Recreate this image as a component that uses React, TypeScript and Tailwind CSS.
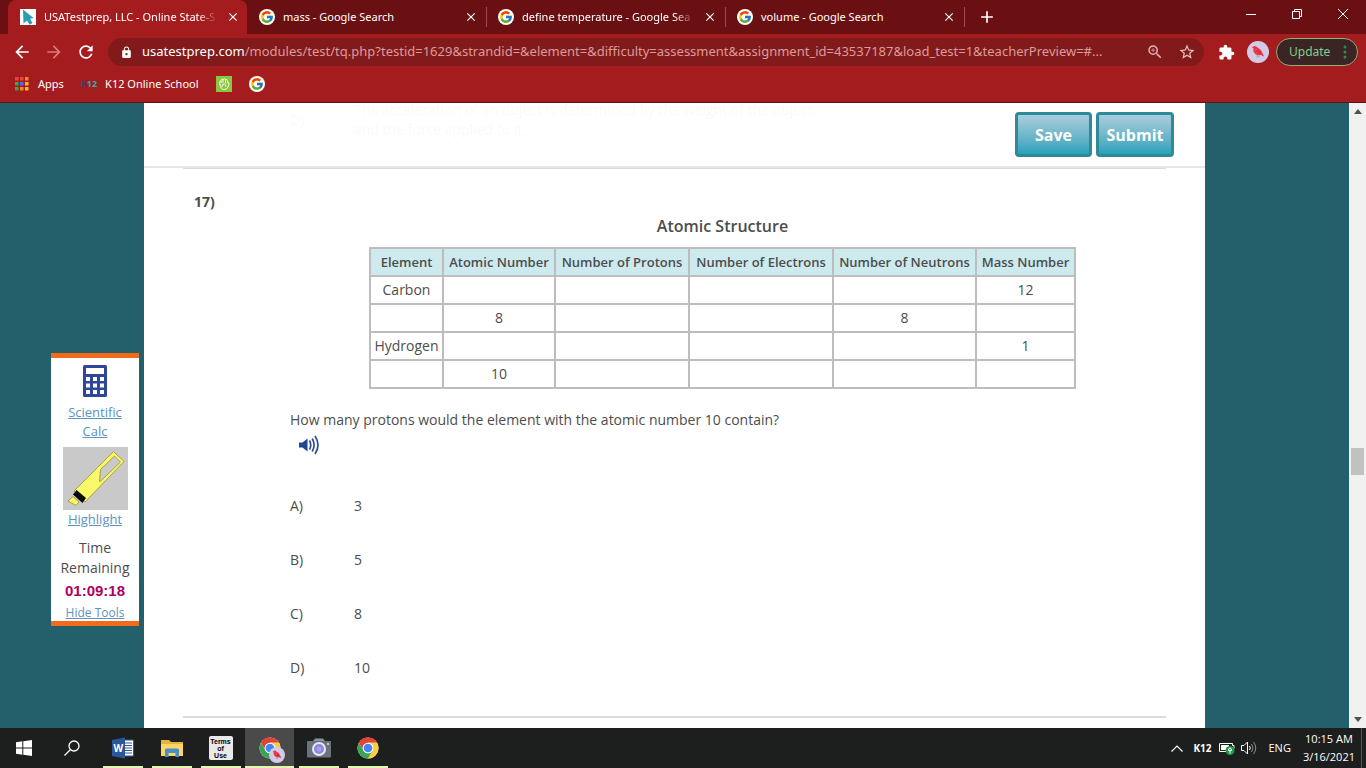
import type { ReactNode } from 'react';
import { FcGoogle } from 'react-icons/fc';
import {
  MdAdd,
  MdArrowBack,
  MdArrowForward,
  MdClose,
  MdExtension,
  MdLock,
  MdRefresh,
  MdStarBorder,
  MdZoomIn,
} from 'react-icons/md';

interface Tab {
  id: number;
  title: string;
  active?: boolean;
}

const tabs: Tab[] = [
  { id: 1, title: 'USATestprep, LLC - Online State-S', active: true },
  { id: 2, title: 'mass - Google Search' },
  { id: 3, title: 'define temperature - Google Sea' },
  { id: 4, title: 'volume - Google Search' },
];

const columns = [
  { name: 'Element', width: 'w-[73px]' },
  { name: 'Atomic Number', width: 'w-[112px]' },
  { name: 'Number of Protons', width: 'w-[134px]' },
  { name: 'Number of Electrons', width: 'w-[144px]' },
  { name: 'Number of Neutrons', width: 'w-[143px]' },
  { name: 'Mass Number', width: 'w-[99px]' },
];

const rows = [
  ['Carbon', '', '', '', '', '12'],
  ['', '8', '', '', '8', ''],
  ['Hydrogen', '', '', '', '', '1'],
  ['', '10', '', '', '', ''],
];

const answers = [
  { letter: 'A)', text: '3' },
  { letter: 'B)', text: '5' },
  { letter: 'C)', text: '8' },
  { letter: 'D)', text: '10' },
];

function GoogleIcon() {
  return (
    <span className="flex size-4 shrink-0 items-center justify-center rounded-full bg-white">
      <FcGoogle size={14} />
    </span>
  );
}

function CursorIcon() {
  return (
    <svg viewBox="0 0 16 16" className="size-4 shrink-0">
      <rect width="16" height="16" fill="#fff" />
      <path d="M3 0.500 L13.500 9 L10 9.800 L12.500 14 L9.500 15.800 L7 11.500 L3.500 14.500 Z" fill="#2a9db0" />
    </svg>
  );
}

function AppsIcon() {
  const colors = ['#e8453c', '#e8453c', '#f08a24', '#35a853', '#4a6cf0', '#f3b52a', '#35a853', '#f08a24', '#f3b52a'];
  return (
    <svg viewBox="0 0 14 14" className="size-[14px]">
      {colors.map((c, i) => (
        <rect key={i} x={(i % 3) * 5} y={Math.floor(i / 3) * 5} width="3.500" height="3.500" fill={c} />
      ))}
    </svg>
  );
}

function HandIcon() {
  return (
    <svg viewBox="0 0 16 16" className="size-4" fill="none" stroke="#fff" strokeLinecap="round" strokeLinejoin="round">
      <rect width="16" height="16" fill="#8cc63f" stroke="none" />
      <path d="M4 8.500 L3.500 6 Q4.500 5 5.200 6.500 L5 4 Q6 2.800 7 4 L7.500 3 Q8.800 2 9.500 3.500 Q11 2.800 11.300 4.500 L11.800 7 Q13.500 6 13 8 L12 11 Q10.500 13.800 8 13.500 Q4.500 13.300 4 8.500 Z" strokeWidth="0.900" />
      <path d="M6 10.500 Q6 8 8.500 8 Q10 8.500 10 10.500 M7 4 V7 M9.500 3.500 V7" strokeWidth="0.900" />
    </svg>
  );
}

function BirdAvatar({ className }: { className: string }) {
  return (
    <svg viewBox="0 0 22 22" className={className}>
      <circle cx="11" cy="11" r="11" fill="#d3cbe6" />
      <path d="M5 6.500 L7 5 Q9 4.500 10.500 6.500 Q14 8 15 11 L17 15.500 L13.500 14 Q8.500 14.500 7 11.500 Q6 9.500 6.500 7.500 Z" fill="#e63946" />
      <path d="M10 9 Q13.500 10 14 13 Q11 12.500 10 9 Z" fill="#c42b3b" />
      <path d="M10.500 14 L10 16.500 M12 14.200 L12 16.500" stroke="#777" strokeWidth="0.600" />
    </svg>
  );
}

function ChromeIcon() {
  return (
    <svg viewBox="0 0 48 48" className="size-[22px]">
      <circle cx="24" cy="24" r="23" fill="#fff" />
      <path d="M24 1 A23 23 0 0 1 43.900 12.500 L24 12.500 A11.500 11.500 0 0 0 14 18.200 L4.100 12.500 A23 23 0 0 1 24 1 Z" fill="#e24434" />
      <path d="M43.900 12.500 A23 23 0 0 1 24 47 L34 29.700 A11.500 11.500 0 0 0 34 18.200 L24 12.500 Z" fill="#fbcd3f" />
      <path d="M4.100 12.500 A23 23 0 0 0 24 47 L34 29.700 A11.500 11.500 0 0 1 14 29.700 Z" fill="#38a455" />
      <path d="M4.100 12.500 L14 29.700 A11.500 11.500 0 0 1 14 18.200 L24 12.500 L24 1 A23 23 0 0 0 4.100 12.500 Z" fill="#e24434" />
      <circle cx="24" cy="24" r="11.500" fill="#fff" />
      <circle cx="24" cy="24" r="9.500" fill="#4385f4" />
    </svg>
  );
}

function CalculatorIcon() {
  return (
    <svg viewBox="0 0 24 32" className="h-8 w-6">
      <rect width="24" height="32" rx="1.500" fill="#2f479b" />
      <rect x="3" y="3" width="18" height="6" fill="#fff" />
      {[12, 18.500, 25].map((y) =>
        [3, 10, 17].map((x) => <rect key={`${x}-${y}`} x={x} y={y} width="4" height="4" fill="#fff" />)
      )}
    </svg>
  );
}

function HighlighterIcon() {
  return (
    <svg viewBox="0 0 65 63" className="h-[63px] w-[65px]">
      <rect width="65" height="63" fill="#c9c9c9" />
      <path d="M50.500 4.500 L61 14.500 L22 55 L11 44 Z" fill="#f9f96a" stroke="#a8a040" />
      <path d="M51.500 9 L57.500 15 L38.500 33.500 L36.500 34.500 L37.500 22.500 Z" fill="#c9c9c9" stroke="#a8a040" />
      <path d="M13.500 43 L23 51 L19.500 56 L10 47.500 Z" fill="#0a0a0a" />
      <path d="M10 49.500 L16 55 L13 58.500 L5 54 Z" fill="#f9f96a" stroke="#a8a040" />
    </svg>
  );
}

function SpeakerIcon() {
  return (
    <svg viewBox="0 0 20 20" className="size-5" fill="none" stroke="#2a4f94" strokeWidth="1.700">
      <path d="M0 7.500 L3.500 7.500 L8.500 3.500 L8.500 16.500 L3.500 12.500 L0 12.500 Z" fill="#1f4690" stroke="none" />
      <path d="M10.500 5.500 Q13 10 10.500 14.500 M13.200 3.500 Q17 10 13.200 16.500 M16 1 Q22 10 16 19" />
    </svg>
  );
}

function TabStrip() {
  return (
    <div className="flex h-[34px] items-stretch bg-[#6a1012] pl-2">
      {tabs.map((tab) => (
        <div
          key={tab.id}
          className={`flex w-[239px] items-center gap-2 pr-[7px] pl-3 ${tab.active ? 'rounded-t-lg bg-[#a51c1e]' : ''}`}
        >
          {tab.active ? <CursorIcon /> : <GoogleIcon />}
          <span className={`flex-1 whitespace-nowrap ${tab.title.length > 25 ? 'mask-r-from-88%' : ''}`}>
            {tab.title}
          </span>
          <button aria-label="Close tab">
            <MdClose size={14} />
          </button>
          {!tab.active && <span className="-mr-2 h-5 w-px bg-[#a14b4c]" />}
        </div>
      ))}
      <button aria-label="New tab" className="ml-[13px]">
        <MdAdd size={20} />
      </button>
      <div className="ml-auto flex">
        <button aria-label="Minimize" className="flex h-7 w-[46px] items-center justify-center">
          <svg viewBox="0 0 10 10" className="size-[10px]" stroke="#fff"><path d="M0 5.500 H10" /></svg>
        </button>
        <button aria-label="Restore" className="flex h-7 w-[46px] items-center justify-center">
          <svg viewBox="0 0 10 10" className="size-[10px]" fill="none" stroke="#fff">
            <path d="M0.500 2.500 H7.500 V9.500 H0.500 Z M2.500 2.500 V0.500 H9.500 V7.500 H7.500" />
          </svg>
        </button>
        <button aria-label="Close" className="flex h-7 w-[46px] items-center justify-center">
          <svg viewBox="0 0 10 10" className="size-[10px]" stroke="#fff"><path d="M0 0 L10 10 M10 0 L0 10" /></svg>
        </button>
      </div>
    </div>
  );
}

function Toolbar() {
  return (
    <div className="flex h-9 items-center pr-2 pl-3">
      <button aria-label="Back" className="mr-3"><MdArrowBack size={20} /></button>
      <button aria-label="Forward" className="mr-3 text-[#d97a7b]"><MdArrowForward size={20} /></button>
      <button aria-label="Reload" className="mr-3"><MdRefresh size={20} /></button>
      <div className="flex h-7 min-w-0 flex-1 items-center rounded-full bg-[#821a1c] pr-2 pl-3">
        <MdLock size={13} className="mr-[9px] shrink-0" />
        <span className="min-w-0 flex-1 overflow-hidden text-[13px] whitespace-nowrap text-[#dd9a9a]">
          <span className="text-white">usatestprep.com</span>
          /modules/test/tq.php?testid=1629&amp;strandid=&amp;element=&amp;difficulty=assessment&amp;assignment_id=43537187&amp;load_test=1&amp;teacherPreview=#...
        </span>
        <button aria-label="Zoom" className="mr-[14px] text-[#e0b0b0]"><MdZoomIn size={18} /></button>
        <button aria-label="Bookmark this page" className="text-[#e8c0c0]"><MdStarBorder size={18} /></button>
      </div>
      <button aria-label="Extensions" className="ml-[14px]"><MdExtension size={17} /></button>
      <button aria-label="Profile" className="ml-3"><BirdAvatar className="size-[22px]" /></button>
      <button className="ml-[7px] flex h-7 w-[82px] items-center justify-between rounded-full border border-[#8fae7c] bg-[#3b2524] pr-[10px] pl-3 text-[12px] text-[#7fcf8c]">
        Update
        <svg viewBox="0 0 4 14" className="h-[14px] w-1" fill="#2f8f46">
          <circle cx="2" cy="2" r="1.500" />
          <circle cx="2" cy="7" r="1.500" />
          <circle cx="2" cy="12" r="1.500" />
        </svg>
      </button>
    </div>
  );
}

function BookmarksBar() {
  return (
    <div className="flex h-[33px] items-center gap-[17px] border-b border-[#5c1213] pb-1 pl-[15px]">
      <a href="#apps" className="flex items-center gap-[9px]"><AppsIcon /> Apps</a>
      <a href="#k12" className="flex items-center gap-2">
        <span className="text-[9px] font-bold text-[#3fa3bd]"><span className="text-[#3c3f77]">K</span>12</span>
        K12 Online School
      </a>
      <a href="#class" aria-label="Classroom"><HandIcon /></a>
      <a href="#google" aria-label="Google"><GoogleIcon /></a>
    </div>
  );
}

function ToolsPanel() {
  return (
    <aside className="flex w-36 shrink-0 flex-col justify-start pt-[250px] pr-[5px] pl-[51px]">
      <div className="flex flex-col items-center border-y-[5px] border-[#f26a1b] bg-white pt-[7px] text-center text-[13px]">
        <CalculatorIcon />
        <a href="#calc" className="mt-[6px] leading-[19px] text-[#5b93c2] underline">
          Scientific<br />Calc
        </a>
        <a href="#highlight" className="mt-[6px] flex flex-col items-center leading-[19px] text-[#5b93c2] underline">
          <HighlighterIcon />
          Highlight
        </a>
        <p className="mt-[9px] text-[14px] leading-5">Time<br />Remaining</p>
        <p className="mt-[3px] font-['Liberation_Sans',sans-serif] text-[15px] leading-5 font-bold text-[#b0005f]">01:09:18</p>
        <a href="#hide" className="mt-[3px] text-[12px] leading-[17px] text-[#5b93c2] underline">Hide Tools</a>
      </div>
    </aside>
  );
}

function StructureTable() {
  return (
    <table className="mx-auto table-fixed border-collapse text-center text-[14px] leading-[26px]">
      <caption className="pb-2 text-[16px] font-semibold">Atomic Structure</caption>
      <thead>
        <tr className="h-7 bg-[#cdebef] text-[13px]">
          {columns.map((col) => (
            <th key={col.name} className={`border-2 border-[#bdbdbd] p-0 font-semibold whitespace-nowrap ${col.width}`}>
              {col.name}
            </th>
          ))}
        </tr>
      </thead>
      <tbody>
        {rows.map((row, i) => (
          <tr key={i} className="h-7">
            {row.map((cell, j) => (
              <td key={j} className="border-2 border-[#bdbdbd] p-0">{cell}</td>
            ))}
          </tr>
        ))}
      </tbody>
    </table>
  );
}

function TestPage() {
  return (
    <main className="relative min-w-0 flex-1 overflow-hidden bg-white px-[39px] text-[14px]">
      {/* Tail of the previous question, under the sticky bar */}
      <div className="flex h-[65px] items-center pb-8 pl-[107px] leading-5">
        <span className="w-16">D)</span>
        <p>The acceleration of an object is determined by the weight of the object<br />and the force applied to it.</p>
      </div>
      <div className="absolute inset-x-0 top-0 flex h-[65px] justify-end gap-1 border-b-2 border-[#e6e6e6] bg-white/97 pt-[9px] pr-[31px]">
        <button className="h-[45px] w-[77px] rounded-sm border-3 border-[#2f8997] bg-linear-to-b from-[#a9cddd] to-[#22a2ba] text-[16px] font-bold text-white">
          Save
        </button>
        <button className="h-[45px] w-[78px] rounded-sm border-3 border-[#2f8997] bg-linear-to-b from-[#a9cddd] to-[#22a2ba] text-[16px] font-bold text-white">
          Submit
        </button>
      </div>

      <section className="border-t border-b-2 border-[#dcdcdc] pb-[38px]">
        <div className="flex pt-[23px] pl-[11px]">
          <h2 className="w-24 shrink-0 leading-5 font-bold">17)</h2>
          <div className="flex-1 pt-[21px] pr-[11px]">
            <StructureTable />
            <p className="mt-5 leading-[22px]">How many protons would the element with the atomic number 10 contain?</p>
            <button aria-label="Read aloud" className="mt-1 ml-[9px] block"><SpeakerIcon /></button>
            <ol className="mt-[41px] flex flex-col gap-[34px] leading-5">
              {answers.map((a) => (
                <li key={a.letter} className="flex">
                  <span className="w-16">{a.letter}</span>
                  {a.text}
                </li>
              ))}
            </ol>
          </div>
        </div>
      </section>
    </main>
  );
}

function Scrollbar() {
  return (
    <div className="flex w-[17px] flex-col items-center bg-[#f1f1f1] py-[6px]">
      <svg viewBox="0 0 8 5" className="h-[5px] w-2"><path d="M0 5 L4 0 L8 5 Z" fill="#505050" /></svg>
      <div className="grow-[333]" />
      <div className="h-[27px] w-[13px] bg-[#c1c1c1]" />
      <div className="grow-[241]" />
      <svg viewBox="0 0 8 5" className="h-[5px] w-2"><path d="M0 0 L4 5 L8 0 Z" fill="#505050" /></svg>
    </div>
  );
}

function TaskItem({ label, active, children }: { label: string; active?: boolean; children: ReactNode }) {
  return (
    <button
      aria-label={label}
      className={`flex h-full w-[49px] flex-col items-center ${active ? 'bg-[#4a4a4a]' : ''}`}
    >
      <span className="flex flex-1 items-center pt-[2px]">{children}</span>
      <span className={`h-[2px] bg-[#e3f5b0] ${active ? 'w-full' : 'w-10'}`} />
    </button>
  );
}

function Taskbar() {
  return (
    <footer className="flex h-10 shrink-0 items-center bg-[#1d1e1e] text-white">
      <button aria-label="Start" className="flex w-12 justify-center">
        <svg viewBox="0 0 16 16" className="size-4" fill="#fff">
          <path d="M0 2.200 L6.300 1.300 V7.500 H0 Z M7.300 1.200 L16 0 V7.500 H7.300 Z M0 8.500 H6.300 V14.700 L0 13.800 Z M7.300 8.500 H16 V16 L7.300 14.800 Z" />
        </svg>
      </button>
      <button aria-label="Search" className="mr-[2px] flex w-12 justify-center">
        <svg viewBox="0 0 16 16" className="size-4" fill="none" stroke="#fff" strokeWidth="1.300">
          <circle cx="10" cy="6" r="5" />
          <path d="M6.500 9.500 L0.500 15.500" />
        </svg>
      </button>
      <TaskItem label="Word">
        <svg viewBox="0 0 22 22" className="size-[22px]">
          <rect x="11" y="3" width="10.500" height="16" fill="#fff" stroke="#2b579a" />
          <path d="M13 6 H20 M13 8.500 H20 M13 11 H20 M13 13.500 H20 M13 16 H20" stroke="#2b579a" />
          <path d="M0 3 L13 0.500 V21.500 L0 19 Z" fill="#2b579a" />
          <text x="1.500" y="15" fontSize="10" fontWeight="bold" fill="#fff">W</text>
        </svg>
      </TaskItem>
      <TaskItem label="File Explorer">
        <svg viewBox="0 0 22 18" className="h-[18px] w-[22px]">
          <path d="M0 1 H8 L10 3 H22 V17 H0 Z" fill="#e9b23c" />
          <rect y="5" width="22" height="12" fill="#fcd667" />
          <path d="M4 18 V11 Q4 9.500 5.500 9.500 H16.500 Q18 9.500 18 11 V18 H14.500 V14 H7.500 V18 Z" fill="#4a90c4" />
        </svg>
      </TaskItem>
      <TaskItem label="Terms of Use">
        <span className="flex size-6 flex-col justify-center rounded-[2px] bg-[#e9e9e9] text-center font-['Liberation_Sans',sans-serif] text-[7px] leading-[7px] font-bold text-black">
          <span>Terms</span>
          <span>of</span>
          <span>Use</span>
        </span>
      </TaskItem>
      <TaskItem label="Chrome profile" active>
        <span className="relative">
          <ChromeIcon />
          <BirdAvatar className="absolute -right-1 -bottom-1 size-4" />
        </span>
      </TaskItem>
      <TaskItem label="Camera">
        <svg viewBox="0 0 24 20" className="h-5 w-6">
          <path d="M6 3 L8 0.500 H16 L18 3 Z" fill="#8b949c" />
          <rect y="3" width="24" height="16.500" rx="1" fill="#68737d" />
          <circle cx="12" cy="11" r="7" fill="#e8eaf0" />
          <circle cx="12" cy="11" r="5" fill="#8d86dc" />
          <circle cx="12" cy="11" r="2.500" fill="#a7a1ee" />
          <circle cx="21" cy="6" r="1" fill="#dfe6ea" />
        </svg>
      </TaskItem>
      <TaskItem label="Chrome"><ChromeIcon /></TaskItem>

      <div className="ml-auto flex items-center text-[12px]">
        <svg viewBox="0 0 12 7" className="mr-[10px] h-[7px] w-3" fill="none" stroke="#fff" strokeWidth="1.200">
          <path d="M0.500 6.500 L6 1 L11.500 6.500" />
        </svg>
        <span className="mr-2 text-[10px] font-bold">K12</span>
        <svg viewBox="0 0 16 13" className="mr-[6px] h-[13px] w-4">
          <path d="M0.500 1.500 H13.500 V3.500 H15 V6.500 H13.500 V9.500 H0.500 Z" fill="none" stroke="#fff" />
          <rect x="2" y="3" width="8" height="5" fill="#fff" />
          <circle cx="11" cy="8.500" r="4.500" fill="#239a4a" />
          <path d="M11 11.500 V8 M9.500 8.500 Q9.500 6 11 6 Q12.500 6 12.500 8.500 Z" stroke="#fff" fill="none" />
        </svg>
        <svg viewBox="0 0 16 14" className="mr-[11px] h-[14px] w-4" fill="none" stroke="#fff">
          <path d="M0.500 4.500 H3 L6.500 1 V13 L3 9.500 H0.500 Z M8.500 5 Q10 7 8.500 9" />
          <path d="M10.500 3 Q13.500 7 10.500 11 M12.500 1 Q17 7 12.500 13" stroke="#8a8a8a" />
        </svg>
        <span className="mr-3 text-[11px]">ENG</span>
        <div className="mr-[6px] flex h-10 flex-col justify-center text-center text-[11px] leading-[18px]">
          <span>10:15 AM</span>
          <span>3/16/2021</span>
        </div>
        <span className="mr-1 h-10 w-px bg-[#555]" />
      </div>
    </footer>
  );
}

export default function App() {
  return (
    <div className="flex h-screen flex-col overflow-hidden font-['Open_Sans','Noto_Sans',sans-serif] text-[#4d4d4d]">
      <header className="shrink-0 bg-[#a51c1e] font-['Noto_Sans',sans-serif] text-[11px] text-white">
        <TabStrip />
        <Toolbar />
        <BookmarksBar />
      </header>
      <div className="flex min-h-0 flex-1 bg-[#245f6c]">
        <ToolsPanel />
        <TestPage />
        <div className="w-36 shrink-0" />
        <Scrollbar />
      </div>
      <Taskbar />
    </div>
  );
}
